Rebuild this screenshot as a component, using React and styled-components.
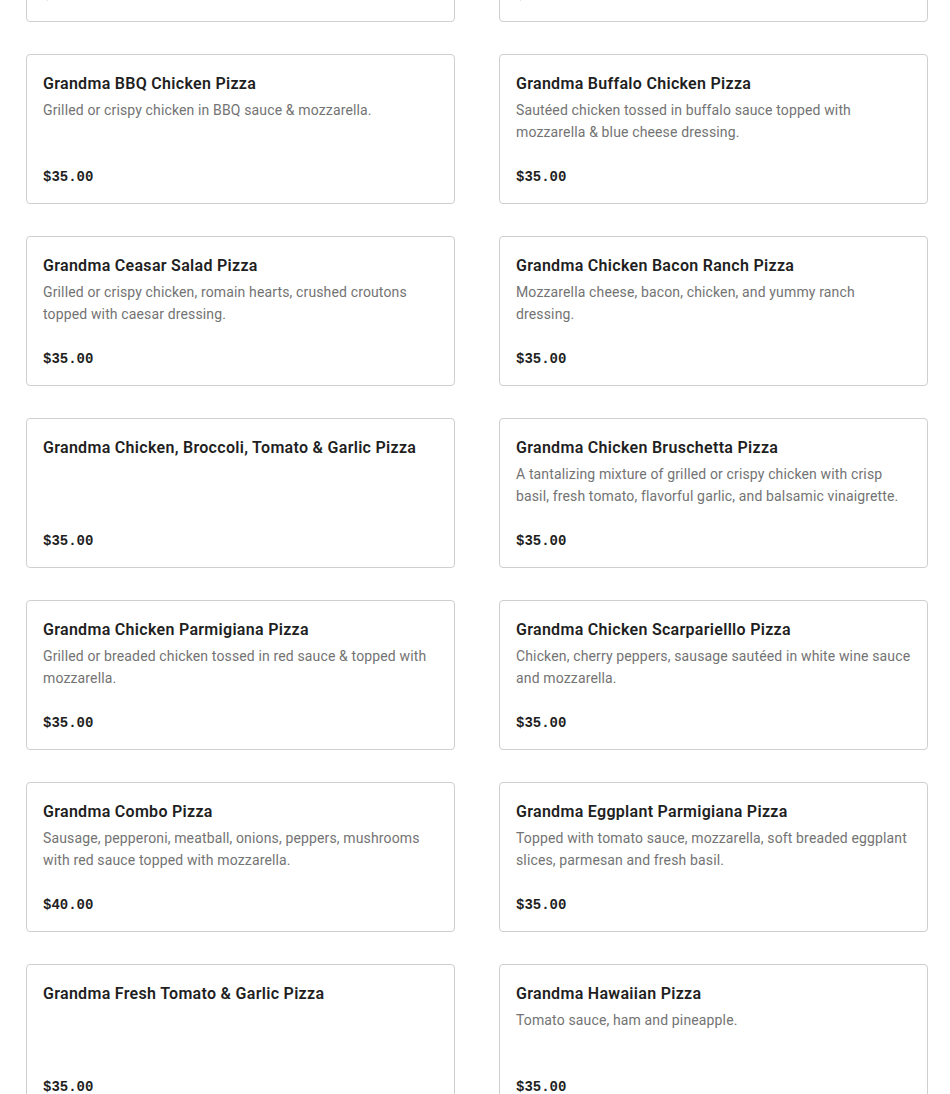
import React from "react";
import styled, { createGlobalStyle } from "styled-components";

const Global = createGlobalStyle`
  html, body { margin: 0; padding: 0; background: #ffffff; }
  body { font-family: Roboto, "Noto Sans", sans-serif; -webkit-font-smoothing: antialiased; }
`;

const Page = styled.div`
  padding: 0 22px 40px 26px;
  margin-top: -128px;
`;

const Grid = styled.div`
  display: grid;
  grid-template-columns: repeat(2, 1fr);
  column-gap: 44px;
  row-gap: 32px;
`;

const Card = styled.div`
  box-sizing: border-box;
  height: 150px;
  border: 1px solid #cfcfcf;
  border-radius: 4px;
  background: #fff;
  padding: 17px 16px 16px 16px;
  display: flex;
  flex-direction: column;
`;

const Title = styled.div`
  font-size: 16px;
  line-height: 24px;
  font-weight: 600;
  letter-spacing: 0.3px;
  color: #1f1f1f;
`;

const Desc = styled.div`
  margin-top: 3px;
  font-size: 14px;
  line-height: 22px;
  letter-spacing: 0.14px;
  color: #737373;
`;

const Price = styled.div`
  margin-top: auto;
  font-family: "Liberation Mono", monospace;
  font-weight: 700;
  font-size: 14px;
  line-height: 20px;
  color: #1f1f1f;
`;

const items = [
  { t: "Grandma Alfredo Pizza", d: "", p: "$35.00" },
  { t: "Grandma Bacon Cheeseburger Pizza", d: "", p: "$35.00" },
  { t: "Grandma BBQ Chicken Pizza", d: "Grilled or crispy chicken in BBQ sauce & mozzarella.", p: "$35.00" },
  { t: "Grandma Buffalo Chicken Pizza", d: "Sautéed chicken tossed in buffalo sauce topped with mozzarella & blue cheese dressing.", p: "$35.00" },
  { t: "Grandma Ceasar Salad Pizza", d: "Grilled or crispy chicken, romain hearts, crushed croutons topped with caesar dressing.", p: "$35.00" },
  { t: "Grandma Chicken Bacon Ranch Pizza", d: "Mozzarella cheese, bacon, chicken, and yummy ranch dressing.", p: "$35.00" },
  { t: "Grandma Chicken, Broccoli, Tomato & Garlic Pizza", d: "", p: "$35.00" },
  { t: "Grandma Chicken Bruschetta Pizza", d: "A tantalizing mixture of grilled or crispy chicken with crisp basil, fresh tomato, flavorful garlic, and balsamic vinaigrette.", p: "$35.00" },
  { t: "Grandma Chicken Parmigiana Pizza", d: "Grilled or breaded chicken tossed in red sauce & topped with mozzarella.", p: "$35.00" },
  { t: "Grandma Chicken Scarpariellllo Pizza".replace("llll", "lll"), d: "Chicken, cherry peppers, sausage sautéed in white wine sauce and mozzarella.", p: "$35.00" },
  { t: "Grandma Combo Pizza", d: "Sausage, pepperoni, meatball, onions, peppers, mushrooms with red sauce topped with mozzarella.", p: "$40.00" },
  { t: "Grandma Eggplant Parmigiana Pizza", d: "Topped with tomato sauce, mozzarella, soft breaded eggplant slices, parmesan and fresh basil.", p: "$35.00" },
  { t: "Grandma Fresh Tomato & Garlic Pizza", d: "", p: "$35.00" },
  { t: "Grandma Hawaiian Pizza", d: "Tomato sauce, ham and pineapple.", p: "$35.00" },
];

export default function App() {
  return (
    <>
      <Global />
      <Page>
        <Grid>
          {items.map((it, i) => (
            <Card key={i}>
              <Title>{it.t}</Title>
              {it.d && <Desc>{it.d}</Desc>}
              <Price>{it.p}</Price>
            </Card>
          ))}
        </Grid>
      </Page>
    </>
  );
}
